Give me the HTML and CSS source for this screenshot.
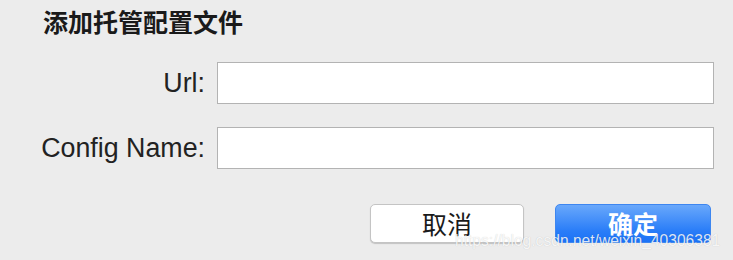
FILE: index.html
```html
<!DOCTYPE html>
<html lang="zh">
<head>
<meta charset="utf-8">
<link rel="stylesheet" href="styles.css">
</head>
<body>
<div class="dialog">
  <h1 class="title">添加托管配置文件</h1>
  <div class="form">
    <label class="label">Url:</label>
    <div class="input"></div>
    <label class="label">Config Name:</label>
    <div class="input"></div>
  </div>
  <div class="actions">
    <button class="btn btn-cancel">取消</button>
    <button class="btn btn-ok">确定</button>
  </div>
  <div class="watermark">https://blog.csdn.net/weixin_40306381</div>
</div>
</body>
</html>
```

FILE: styles.css
```css
html, body {
  margin: 0;
  padding: 0;
  background: #ececec;
}
.dialog {
  position: relative;
  width: 733px;
  height: 260px;
  box-sizing: border-box;
  padding: 7px 19px 0 39px;
  font-family: "Liberation Sans", "Noto Sans CJK SC", sans-serif;
  color: #1d1d1d;
}
.title {
  margin: 0 0 0 4px;
  font-family: "Noto Sans CJK SC", sans-serif;
  font-size: 25px;
  font-weight: 700;
  line-height: 28px;
  color: #1a1a1a;
}
.form {
  margin-top: 27px;
  display: grid;
  grid-template-columns: 166px 1fr;
  column-gap: 12px;
  row-gap: 23px;
  align-items: center;
}
.label {
  text-align: right;
  font-size: 26.8px;
  white-space: nowrap;
  color: #222;
}
.input {
  height: 42px;
  box-sizing: border-box;
  background: #fff;
  border: 1px solid #b3b3b3;
}
.actions {
  margin-top: 35px;
  display: flex;
  justify-content: flex-end;
  gap: 31px;
  padding-right: 3px;
}
.btn {
  font-family: "Noto Sans CJK SC", sans-serif;
  font-size: 25px;
  line-height: 1;
  height: 39px;
  border-radius: 5px;
  padding: 0;
  display: flex;
  align-items: center;
  justify-content: center;
}
.btn-cancel {
  width: 154px;
  background: #fff;
  color: #1a1a1a;
  border: 1px solid #c4c4c4;
  box-shadow: 0 1px 1px rgba(0,0,0,0.18);
}
.btn-ok {
  width: 156px;
  color: #fff;
  font-weight: 700;
  border: 1px solid #3d86f0;
  background: linear-gradient(#69a8fb, #2a7df8 70%, #1b72f6);
}
.watermark {
  position: absolute;
  left: 455px;
  top: 232px;
  font-family: "Liberation Sans", sans-serif;
  font-size: 15.6px;
  color: rgba(255,255,255,0.85);
  text-shadow: 0 0 1px rgba(0,0,0,0.2);
  white-space: nowrap;
}
```
